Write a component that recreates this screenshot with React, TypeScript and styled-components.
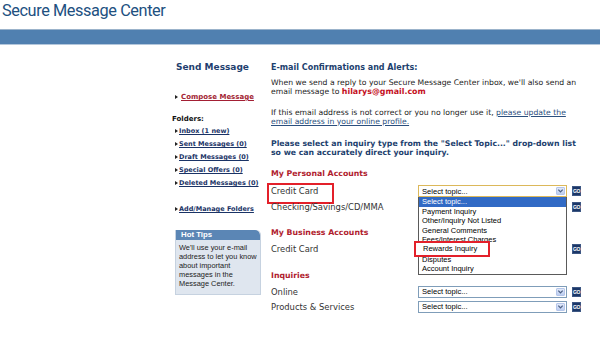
import React from "react";
import styled, { createGlobalStyle } from "styled-components";

const GlobalStyle = createGlobalStyle`
  html, body { margin: 0; padding: 0; background: #fff; }
  body {
    width: 600px; height: 341px; overflow: hidden;
    font-family: "DejaVu Sans", Verdana, sans-serif; color: #222;
  }
  * { box-sizing: border-box; }
`;

const Page = styled.div`
  width: 600px;
  height: 341px;
  overflow: hidden;
`;

const Title = styled.h1`
  margin: 0;
  height: 29px;
  padding: 1px 0 0 2px;
  font-family: Roboto, "Liberation Sans", sans-serif;
  font-weight: 400;
  font-size: 16.3px;
  letter-spacing: -0.4px;
  line-height: 20px;
  color: #21507f;
`;

const Bar = styled.div`
  height: 16px;
  background: #5080b0;
  border-top: 1px solid #9bb3cb;
  border-bottom: 1px solid #b3c7dc;
`;

const Body = styled.div`
  display: grid;
  grid-template-columns: 99px 320px;
  padding-left: 172px;
`;

const Sidebar = styled.nav`
  display: flex;
  flex-direction: column;
`;

const SideTitle = styled.div`
  margin: 16px 0 0 4px;
  font-size: 9px;
  font-weight: bold;
  line-height: 12px;
  color: #1f3f6f;
  white-space: nowrap;
`;

const NavLink = styled.a<{ $compose?: boolean; $gap: number }>`
  display: flex;
  align-items: center;
  margin: ${(p) => p.$gap}px 0 0 3px;
  height: ${(p) => (p.$compose ? 11 : 13)}px;
  font-size: ${(p) => (p.$compose ? 7 : 6.5)}px;
  font-weight: bold;
  color: ${(p) => (p.$compose ? "#a31f34" : "#1a3366")};
  text-decoration: underline;
  white-space: nowrap;
  cursor: pointer;
  &::before {
    content: "";
    width: 0;
    height: 0;
    border-left: 3px solid #222;
    border-top: 2.5px solid transparent;
    border-bottom: 2.5px solid transparent;
    margin-right: ${(p) => (p.$compose ? 3 : 1)}px;
  }
`;

const FoldersLabel = styled.div`
  margin-top: 11px;
  font-size: 7px;
  line-height: 11px;
  font-weight: bold;
  color: #111;
`;

const Tips = styled.aside`
  margin: 14.5px 0 0 3px;
  width: 86px;
  background: #dfe6ef;
  border: 1px solid #c6d2e0;
  border-top: none;
  border-radius: 0 5px 0 0;
  overflow: hidden;
  font-family: "Liberation Sans", Arial, sans-serif;
`;

const TipsHead = styled.div`
  height: 10px;
  background: #5b86b5;
  color: #fff;
  font-weight: bold;
  font-size: 7.8px;
  line-height: 10px;
  padding-left: 5px;
  border-radius: 0 5px 0 0;
`;

const TipsBody = styled.p`
  margin: 0;
  padding: 3px 2px 6px 3px;
  font-size: 7.4px;
  line-height: 9px;
  color: #222;
  white-space: nowrap;
`;

const Main = styled.main`
  display: flex;
  flex-direction: column;
`;

const Heading = styled.h2`
  margin: 16.5px 0 0;
  font-size: 8px;
  line-height: 11px;
  font-weight: bold;
  color: #1d3f6e;
  white-space: nowrap;
`;

const Para = styled.p<{ $gap: number }>`
  margin: ${(p) => p.$gap}px 0 0;
  font-size: 7.7px;
  line-height: 9px;
  color: #222;
  white-space: nowrap;
`;

const Email = styled.span`
  font-weight: bold;
  color: #c4101e;
  font-size: 7.9px;
`;

const TextLink = styled.a`
  color: #2b4f7e;
  text-decoration: underline;
`;

const Instruction = styled.p`
  margin: 13px 0 0;
  font-size: 7.75px;
  line-height: 9px;
  font-weight: bold;
  color: #1d3f6e;
  white-space: nowrap;
`;

const Section = styled.h3<{ $gap: number }>`
  margin: ${(p) => p.$gap}px 0 0;
  font-size: 7.8px;
  line-height: 11px;
  font-weight: bold;
  color: #b01c2e;
  white-space: nowrap;
`;

const Rows = styled.div<{ $gap: number }>`
  margin-top: ${(p) => p.$gap}px;
  display: flex;
  flex-direction: column;
`;

const Row = styled.div<{ $h: number }>`
  display: grid;
  grid-template-columns: 147px 149px 14px;
  height: ${(p) => p.$h}px;
  align-items: center;
`;

const Label = styled.div<{ $marked?: boolean }>`
  position: relative;
  height: 100%;
  display: flex;
  align-items: center;
  font-size: 8.4px;
  color: #333;
  white-space: nowrap;
  &::after {
    content: "";
    display: ${(p) => (p.$marked ? "block" : "none")};
    position: absolute;
    left: -4px;
    top: 0;
    width: 63px;
    height: 17px;
    border: 2px solid #e3202a;
  }
`;

const SelectBox = styled.div<{ $focus?: boolean; $open?: boolean }>`
  position: relative;
  z-index: ${(p) => (p.$open ? 5 : 1)};
  height: 12px;
  border: 1px solid ${(p) => (p.$focus ? "#dcb85a" : "#7f9db9")};
  background: #fff;
  display: flex;
  align-items: center;
  justify-content: space-between;
  padding-left: 3px;
  font-family: "Liberation Sans", Arial, sans-serif;
  font-size: 7.6px;
  color: #000;
`;

const ArrowBtn = styled.span`
  width: 9px;
  height: 8px;
  margin-right: 1px;
  border-radius: 1px;
  background: linear-gradient(#e1e9f9, #bccdf0);
  border: 1px solid #b5c6ea;
  display: flex;
  align-items: center;
  justify-content: center;
`;

const List = styled.ul`
  position: absolute;
  top: 11px;
  left: -1px;
  right: -1px;
  margin: 0;
  padding: 0;
  list-style: none;
  background: #fff;
  border: 1px solid #5a5a5a;
  border-top: none;
`;

const Item = styled.li<{ $active?: boolean }>`
  height: 9.6px;
  line-height: 9.6px;
  padding-left: 3px;
  font-size: 7.5px;
  white-space: nowrap;
  background: ${(p) => (p.$active ? "#316ac5" : "transparent")};
  color: ${(p) => (p.$active ? "#fff" : "#000")};
`;

const Callout = styled.div`
  position: absolute;
  left: -5px;
  top: 44px;
  width: 76px;
  height: 16px;
  border: 2px solid #e3202a;
  background: #fff;
  padding-left: 7px;
  font-size: 7.5px;
  line-height: 12px;
  color: #000;
  white-space: nowrap;
`;

const Go = styled.button`
  justify-self: end;
  width: 9px;
  height: 10px;
  padding: 0;
  border: 1px solid #3d5783;
  background: #1b3768;
  color: #fff;
  font-family: "Liberation Sans", Arial, sans-serif;
  font-weight: bold;
  font-size: 5px;
  line-height: 8px;
  letter-spacing: -0.3px;
  display: flex;
  align-items: center;
  justify-content: center;
`;

const Chevron = () => (
  <svg width="7" height="6" viewBox="0 0 7 6">
    <path d="M1.3 1.6 L3.5 3.9 L5.7 1.6" fill="none" stroke="#4d6185" strokeWidth="1.3" />
  </svg>
);

const topics = [
  "Select topic...",
  "Payment Inquiry",
  "Other/Inquiry Not Listed",
  "General Comments",
  "Fees/Interest Charges",
  "Rewards Inquiry",
  "Disputes",
  "Account Inquiry",
];

const TopicSelect: React.FC<{ focus?: boolean; open?: boolean }> = ({ focus, open }) => (
  <SelectBox $focus={focus} $open={open}>
    <span>Select topic...</span>
    <ArrowBtn>
      <Chevron />
    </ArrowBtn>
    {open && (
      <List>
        {topics.map((t, i) => (
          <Item key={t} $active={i === 0}>
            {t}
          </Item>
        ))}
        <Callout>Rewards Inquiry</Callout>
      </List>
    )}
  </SelectBox>
);

const AccountRow: React.FC<{ label: string; h: number; marked?: boolean; focus?: boolean; open?: boolean }> = ({
  label,
  h,
  marked,
  focus,
  open,
}) => (
  <Row $h={h}>
    <Label $marked={marked}>{label}</Label>
    <TopicSelect focus={focus} open={open} />
    <Go>GO</Go>
  </Row>
);

export default function App() {
  return (
    <Page>
      <GlobalStyle />
      <Title>Secure Message Center</Title>
      <Bar />
      <Body>
        <Sidebar>
          <SideTitle>Send Message</SideTitle>
          <NavLink $compose $gap={18.5}>Compose Message</NavLink>
          <FoldersLabel>Folders:</FoldersLabel>
          <NavLink $gap={0}>Inbox (1 new)</NavLink>
          <NavLink $gap={0}>Sent Messages (0)</NavLink>
          <NavLink $gap={0}>Draft Messages (0)</NavLink>
          <NavLink $gap={0}>Special Offers (0)</NavLink>
          <NavLink $gap={0}>Deleted Messages (0)</NavLink>
          <NavLink $gap={13}>Add/Manage Folders</NavLink>
          <Tips>
            <TipsHead>Hot Tips</TipsHead>
            <TipsBody>
              We'll use your e-mail
              <br />
              address to let you know
              <br />
              about important
              <br />
              messages in the
              <br />
              Message Center.
            </TipsBody>
          </Tips>
        </Sidebar>
        <Main>
          <Heading>E-mail Confirmations and Alerts:</Heading>
          <Para $gap={5}>
            When we send a reply to your Secure Message Center inbox, we'll also send an
            <br />
            email message to <Email>hilarys@gmail.com</Email>
          </Para>
          <Para $gap={12}>
            If this email address is not correct or you no longer use it,{" "}
            <TextLink>please update the</TextLink>
            <br />
            <TextLink>email address in your online profile.</TextLink>
          </Para>
          <Instruction>
            Please select an inquiry type from the "Select Topic..." drop-down list
            <br />
            so we can accurately direct your inquiry.
          </Instruction>
          <Section $gap={11}>My Personal Accounts</Section>
          <Rows $gap={4.5}>
            <AccountRow label="Credit Card" h={16} marked focus open />
            <AccountRow label="Checking/Savings/CD/MMA" h={16} />
          </Rows>
          <Section $gap={11.5}>My Business Accounts</Section>
          <Rows $gap={3.5}>
            <AccountRow label="Credit Card" h={16} />
          </Rows>
          <Section $gap={12.5}>Inquiries</Section>
          <Rows $gap={3.5}>
            <AccountRow label="Online" h={15} />
            <AccountRow label="Products & Services" h={15} />
          </Rows>
        </Main>
      </Body>
    </Page>
  );
}
